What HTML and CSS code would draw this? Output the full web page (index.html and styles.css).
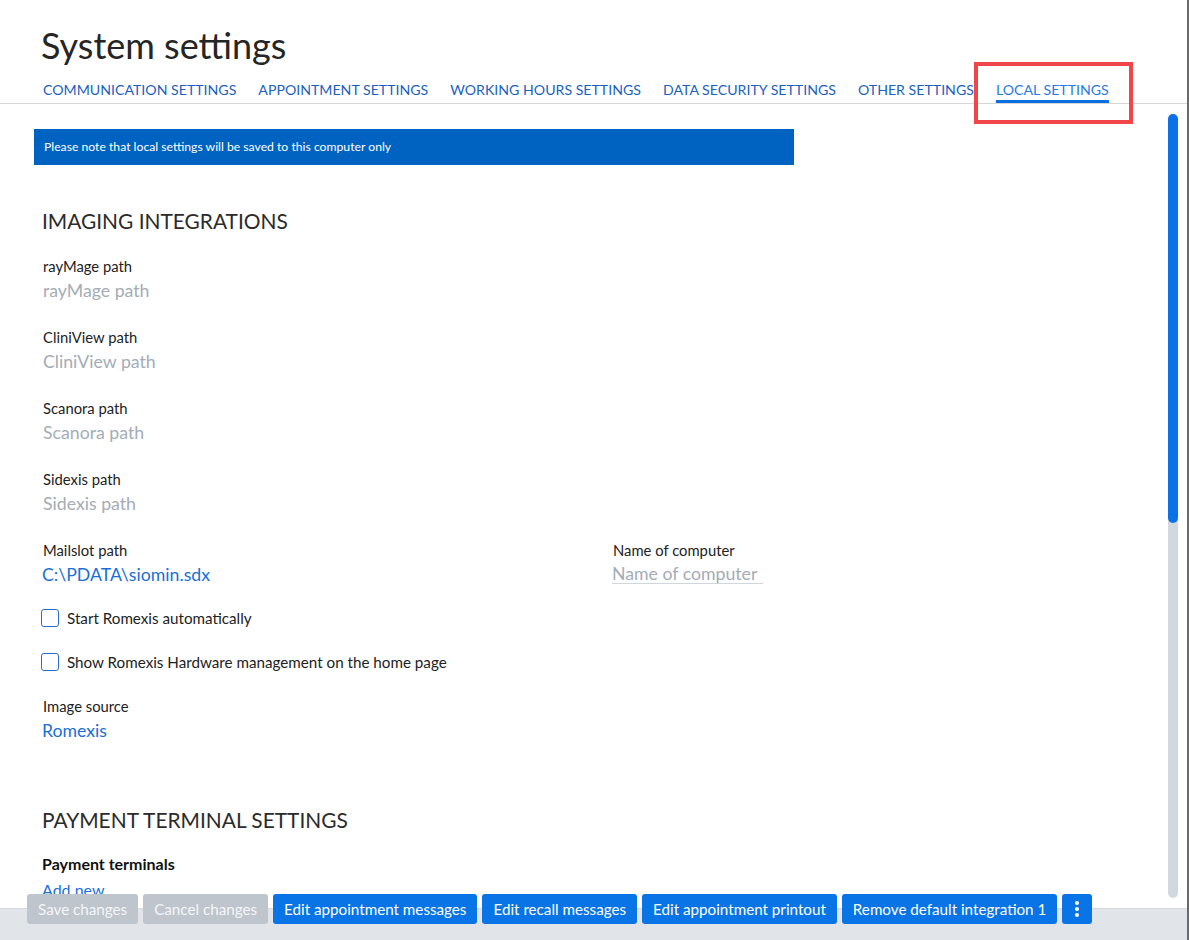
FILE: index.html
```html
<!doctype html>
<html lang="en">
<head>
    <meta charset="utf-8">
    <title>System settings</title>
    <link rel="stylesheet" href="styles.css">
</head>
<body>
<div class="window">
    <header class="page-head">
        <h1 class="page-title">System settings</h1>
        <nav class="tabs">
            <a class="tab">COMMUNICATION SETTINGS</a>
            <a class="tab">APPOINTMENT SETTINGS</a>
            <a class="tab">WORKING HOURS SETTINGS</a>
            <a class="tab">DATA SECURITY SETTINGS</a>
            <a class="tab">OTHER SETTINGS</a>
            <a class="tab active">LOCAL SETTINGS</a>
            <span class="highlight-box"></span>
        </nav>
    </header>

    <main class="content">
        <div class="notice">Please note that local settings will be saved to this computer only</div>

        <section class="group">
            <h2 class="group-title">IMAGING INTEGRATIONS</h2>

            <div class="field">
                <div class="field-label">rayMage path</div>
                <div class="field-value empty">rayMage path</div>
            </div>
            <div class="field">
                <div class="field-label">CliniView path</div>
                <div class="field-value empty">CliniView path</div>
            </div>
            <div class="field">
                <div class="field-label">Scanora path</div>
                <div class="field-value empty">Scanora path</div>
            </div>
            <div class="field">
                <div class="field-label">Sidexis path</div>
                <div class="field-value empty">Sidexis path</div>
            </div>

            <div class="field-row">
                <div class="field">
                    <div class="field-label">Mailslot path</div>
                    <div class="field-value">C:\PDATA\siomin.sdx</div>
                </div>
                <div class="field">
                    <div class="field-label">Name of computer</div>
                    <input class="text-input" type="text" placeholder="Name of computer">
                </div>
            </div>

            <div class="checks">
                <label class="check"><span class="check-box"></span>Start Romexis automatically</label>
                <label class="check"><span class="check-box"></span>Show Romexis Hardware management on the home page</label>
            </div>

            <div class="field">
                <div class="field-label">Image source</div>
                <div class="field-value">Romexis</div>
            </div>
        </section>

        <section class="group payment">
            <h2 class="group-title">PAYMENT TERMINAL SETTINGS</h2>
            <div class="sub-title">Payment terminals</div>
            <a class="add-link">Add new</a>
        </section>
    </main>

    <div class="scrollbar"><div class="scroll-thumb"></div></div>

    <footer class="action-bar">
        <div class="actions">
            <button type="button" class="btn disabled">Save changes</button>
            <button type="button" class="btn disabled">Cancel changes</button>
            <button type="button" class="btn">Edit appointment messages</button>
            <button type="button" class="btn">Edit recall messages</button>
            <button type="button" class="btn">Edit appointment printout</button>
            <button type="button" class="btn">Remove default integration 1</button>
            <button type="button" class="btn more">
                <svg width="4" height="16" viewBox="0 0 4 16"><circle cx="2" cy="2" r="2" fill="#fff"/><circle cx="2" cy="8" r="2" fill="#fff"/><circle cx="2" cy="14" r="2" fill="#fff"/></svg>
            </button>
        </div>
    </footer>
</div>
</body>
</html>
```

FILE: styles.css
```css
*{
   box-sizing: border-box;
}
body{
   margin: 0;
   background: #fff;
   font-family: Lato, "Liberation Sans", sans-serif;
   color: #252525;
}
.window{
   position: relative;
   width: 1189px;
   height: 940px;
   overflow: hidden;
   border-right: 2px solid #6a6a6a;
}

/* header + tabs */
.page-title{
   margin: 0;
   padding: 23px 0 0 41px;
   font-size: 36px;
   line-height: 44px;
   font-weight: 400;
   color: #252525;
}
.tabs{
   position: relative;
   display: flex;
   gap: 22px;
   margin-top: 13px;
   padding-left: 43px;
   border-bottom: 1px solid #d6d6d6;
}
.tab{
   font-size: 14.15px;
   line-height: 21px;
   padding-top: 1px;
   margin-top: -2px;
   color: #1b5fc1;
   border-bottom: 3px solid transparent;
   cursor: pointer;
}
.tab.active{
   color: #2a7ae6;
   border-bottom-color: #0a6fe0;
}
.highlight-box{
   position: absolute;
   left: 974px;
   top: -18px;
   width: 159px;
   height: 62px;
   border: 4px solid #f0464a;
}

/* content */
.content{
   padding-left: 34px;
}
.notice{
   width: 760px;
   height: 36px;
   margin-top: 25px;
   padding-left: 10px;
   background: #0063c1;
   color: #fff;
   font-size: 12.2px;
   line-height: 36px;
}
.group{
   padding-left: 8px;
}
.group-title{
   margin: 41px 0 20px;
   font-size: 20.9px;
   line-height: 30px;
   font-weight: 400;
   color: #2b2b2b;
}
.field{
   margin-bottom: 24px;
}
.field-label{
   font-size: 14.8px;
   line-height: 20px;
   padding-left: 1px;
   color: #222;
}
.field-value{
   margin-top: 3px;
   font-size: 17.7px;
   line-height: 24px;
   color: #1a6fd8;
}
.field-value.empty{
   color: #a4acb6;
   padding-left: 1px;
}
.field-row{
   display: grid;
   grid-template-columns: 570px 200px;
}
.text-input{
   display: block;
   width: 151px;
   height: 21px;
   margin-top: 3px;
   padding: 0;
   border: none;
   border-bottom: 1px solid #cfd6de;
   font-family: inherit;
   font-size: 17.7px;
   outline: none;
}
.text-input::placeholder{
   color: #a4acb6;
}
.checks{
   display: flex;
   flex-direction: column;
   gap: 20px;
   margin: -5px 0 22px -1px;
}
.check{
   display: flex;
   align-items: center;
   gap: 8px;
   height: 24px;
   font-size: 15.2px;
   color: #222;
}
.check-box{
   width: 18px;
   height: 18px;
   border: 1.5px solid #2a6dcc;
   border-radius: 3px;
}
.payment .group-title{
   margin: 62px 0 19px;
}
.sub-title{
   font-size: 16px;
   line-height: 20px;
   font-weight: 700;
   color: #111;
}
.add-link{
   display: block;
   margin-top: 4px;
   font-size: 16px;
   line-height: 24px;
   color: #1a6fd8;
}

/* fake scrollbar */
.scrollbar{
   position: absolute;
   left: 1168px;
   top: 114px;
   width: 10px;
   height: 784px;
   background: #d1d8e0;
   border-radius: 5px;
}
.scroll-thumb{
   height: 409px;
   background: #0a72e6;
   border-radius: 5px;
}

/* bottom actions */
.action-bar{
   position: absolute;
   left: 0;
   right: 0;
   bottom: 0;
   height: 32px;
   background: #e1e5e9;
   border-top: 1px solid #d7dbe0;
}
.actions{
   display: flex;
   gap: 5px;
   margin-top: -15px;
   padding-left: 27px;
}
.btn{
   height: 30px;
   padding: 0 11px;
   border: none;
   border-radius: 3px;
   background: #0874e6;
   color: #fff;
   font-family: inherit;
   font-size: 15.2px;
   cursor: pointer;
}
.btn.disabled{
   background: #bec5cd;
   color: #f4f6f8;
}
.btn.more{
   width: 30px;
   padding: 0;
   display: flex;
   align-items: center;
   justify-content: center;
}
```
